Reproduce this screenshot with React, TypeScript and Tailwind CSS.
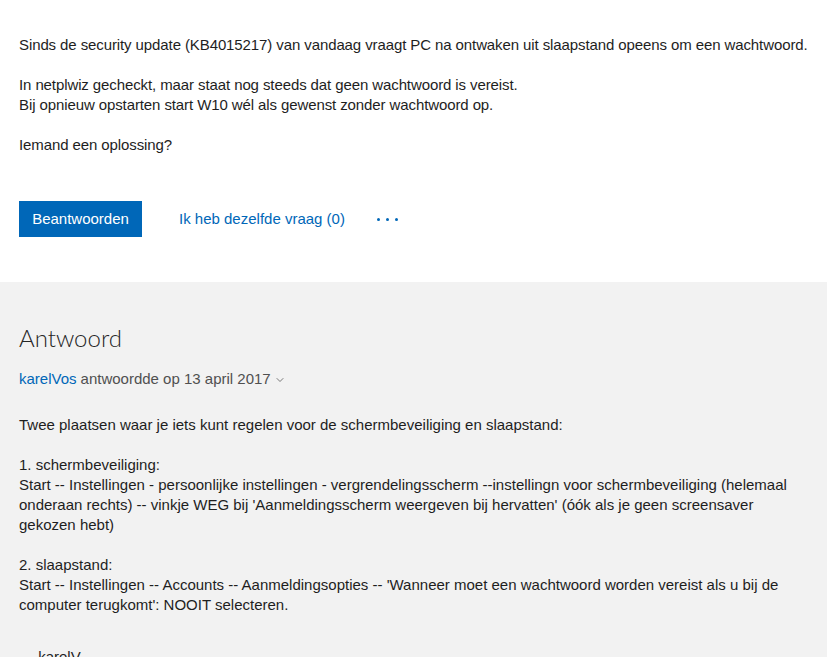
import { ChevronDown } from "lucide-react";

const font = { fontFamily: '"Liberation Sans", Arial, sans-serif' };

function Lines({ lines }: { lines: string[] }) {
  return (
    <p>
      {lines.map((line, i) => (
        <span key={i} className="block whitespace-nowrap">
          {line}
        </span>
      ))}
    </p>
  );
}

export default function App() {
  return (
    <div className="min-h-[657px] overflow-hidden text-[15px] leading-5 text-[#1e1e1e]" style={font}>
      <section className="bg-white px-[19px] pb-[45px] pt-[35px]">
        <div className="space-y-5 tracking-[-0.1px]">
          <Lines lines={["Sinds de security update (KB4015217) van vandaag vraagt PC na ontwaken uit slaapstand opeens om een wachtwoord."]} />
          <Lines
            lines={[
              "In netplwiz gecheckt, maar staat nog steeds dat geen wachtwoord is vereist.",
              "Bij opnieuw opstarten start W10 wél als gewenst zonder wachtwoord op."
            ]}
          />
          <Lines lines={["Iemand een oplossing?"]} />
        </div>
        <div className="mt-[46px] flex items-center">
          <button className="h-9 w-[123px] bg-[#0067b8] text-white">Beantwoorden</button>
          <a className="ml-[37px] text-[#0067b8]">Ik heb dezelfde vraag (0)</a>
          <span className="ml-[32px] flex gap-[6px]" aria-label="Meer opties">
            <span className="h-[3px] w-[3px] rounded-full bg-[#0067b8]" />
            <span className="h-[3px] w-[3px] rounded-full bg-[#0067b8]" />
            <span className="h-[3px] w-[3px] rounded-full bg-[#0067b8]" />
          </span>
        </div>
      </section>
      <section className="bg-[#f2f2f2] px-[19px] pt-10 pb-10">
        <h2 className="text-2xl font-light leading-8 text-[#262626]" style={{ fontFamily: "Lato, sans-serif" }}>
          Antwoord
        </h2>
        <div className="mt-[15px] flex items-center text-[#505050]">
          <a className="text-[#0067b8]">karelVos</a>
          <span className="ml-1">antwoordde op 13 april 2017</span>
          <ChevronDown size={12} strokeWidth={1.5} className="ml-[3px] mt-[2px]" />
        </div>
        <div className="mt-[26px] space-y-5">
          <Lines lines={["Twee plaatsen waar je iets kunt regelen voor de schermbeveiliging en slaapstand:"]} />
          <Lines
            lines={[
              "1. schermbeveiliging:",
              "Start -- Instellingen - persoonlijke instellingen - vergrendelingsscherm --instellingn voor schermbeveiliging (helemaal",
              "onderaan rechts) -- vinkje WEG bij 'Aanmeldingsscherm weergeven bij hervatten' (óók als je geen screensaver",
              "gekozen hebt)"
            ]}
          />
          <Lines
            lines={[
              "2. slaapstand:",
              "Start -- Instellingen -- Accounts -- Aanmeldingsopties -- 'Wanneer moet een wachtwoord worden vereist als u bij de",
              "computer terugkomt': NOOIT selecteren."
            ]}
          />
          <p className="pt-3">--- karelV</p>
        </div>
      </section>
    </div>
  );
}
